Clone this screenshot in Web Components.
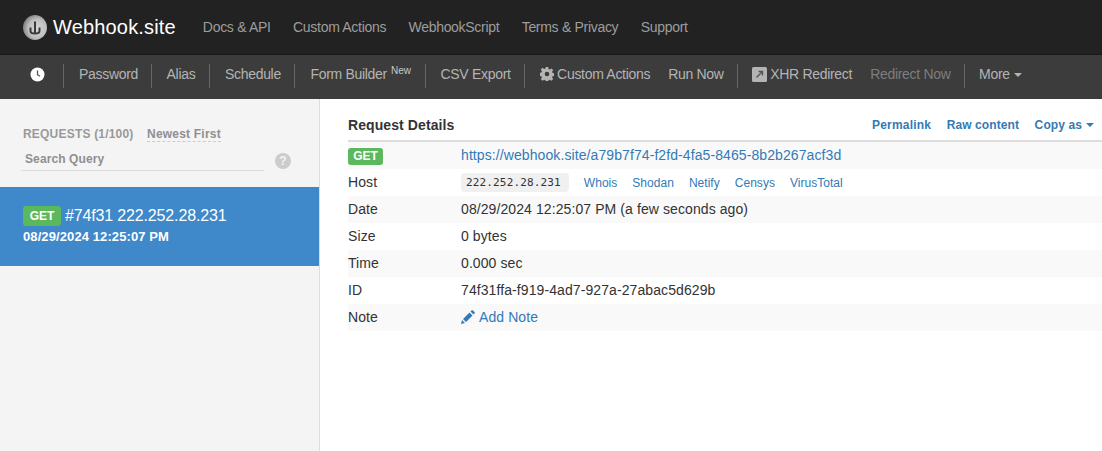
<!DOCTYPE html>
<html lang="en"><head><meta charset="utf-8"><title>Webhook.site</title>
<style>
html,body{margin:0;padding:0;height:100%;overflow:hidden;background:#fff;font:14px/20px "Liberation Sans",Arial,sans-serif;color:#333}
</style></head><body>
<wh-app>
  <wh-topbar></wh-topbar>
  <wh-toolbar></wh-toolbar>
  <wh-main>
    <wh-sidebar slot="side"></wh-sidebar>
    <wh-details slot="content"></wh-details>
  </wh-main>
</wh-app>
<script>
function el(name,html){customElements.define(name,class extends HTMLElement{constructor(){super();this.attachShadow({mode:'open'}).innerHTML=html;}});}
el('wh-app',`<style>:host{display:flex;flex-direction:column;height:451px;overflow:hidden}</style><slot></slot>`);
el('wh-topbar',`<style>
:host{display:flex;align-items:center;background:#222;flex:none;padding-left:23px;box-sizing:border-box;border-bottom:1px solid #1a1a1a;height:55px}
.brand{display:flex;align-items:center;gap:6px;color:#fff;font-size:20px;margin-right:27px;letter-spacing:.17px}
nav{display:flex;gap:22.400px;color:#9d9d9d;letter-spacing:-.3px}
a{white-space:nowrap}
svg{display:block}
</style>
<div class="brand"><svg width="24" height="25" viewBox="0 0 24 25"><defs><radialGradient id="g" cx=".6" cy=".55" r=".7"><stop offset="0" stop-color="#d8d8d8"/><stop offset=".55" stop-color="#bdbdbd"/><stop offset="1" stop-color="#666"/></radialGradient></defs><ellipse cx="12" cy="12.500" rx="12" ry="12.500" fill="url(#g)"/><path d="M12 6.500v12M7.500 12.500v3.500c0 1.800 1.500 2.500 4.500 2.500s4.500-.7 4.500-2.500v-3.500" fill="none" stroke="#3a3a3a" stroke-width="2"/></svg><span>Webhook.site</span></div>
<nav><a>Docs &amp; API</a><a>Custom Actions</a><a>WebhookScript</a><a>Terms &amp; Privacy</a><a>Support</a></nav>`);
el('wh-toolbar',`<style>
:host{display:flex;align-items:center;height:44px;background:#3c3c3c;flex:none;color:#b4b4b4;padding:0 0 6px 30px;box-sizing:border-box;letter-spacing:-.3px}
i{display:block;width:1px;height:24px;background:#666;flex:none;margin-top:3px}
a{white-space:nowrap;display:flex;align-items:center;padding:0 13.500px 0 15px}
a.r{padding-right:18px;padding-left:0}
.dim{color:#7d7d7d}
sup{font-size:10px;line-height:0;position:relative;top:-3px;margin-left:4px;color:#c8c8c8;letter-spacing:0}
svg{display:block;flex:none}
.caret{width:0;height:0;border:4px solid transparent;border-top-color:currentColor;border-bottom:0;margin-left:4px;margin-top:2px}
.clock{margin-right:18px}
</style>
<svg class="clock" width="15" height="15" viewBox="0 0 15 15"><circle cx="7.500" cy="7.500" r="7" fill="#fff"/><path d="M7.500 3.500v4.200l2.500 1.500" fill="none" stroke="#555" stroke-width="1.300"/></svg>
<i></i><a style="padding-right:12.500px">Password</a><i></i><a>Alias</a><i></i><a>Schedule</a><i></i><a style="padding:0 14.500px 0 15px">Form Builder<sup>New</sup></a><i></i><a style="padding-left:14px">CSV Export</a><i></i>
<a class="r" style="padding-left:15px"><svg width="14" height="14" viewBox="0 0 14 14" style="margin-right:3px"><path fill="#b4b4b4" fill-rule="evenodd" d="M5.800 0h2.400l.4 2 1.200.5 1.700-1.100 1.700 1.700-1.100 1.700.5 1.200 2 .4v2.400l-2 .4-.5 1.200 1.100 1.700-1.700 1.700-1.700-1.100-1.200.5-.4 2H5.800l-.4-2-1.200-.5-1.700 1.100-1.700-1.700 1.100-1.700-.5-1.200-2-.4V5.800l2-.4.5-1.200-1.100-1.700 1.700-1.700 1.700 1.100 1.200-.5zM7 4.700a2.300 2.300 0 1 0 0 4.600 2.300 2.300 0 0 0 0-4.600z"/></svg>Custom Actions</a>
<a class="r" style="padding-right:13.500px">Run Now</a><i></i>
<a class="r" style="padding-left:14px"><svg width="15" height="15" viewBox="0 0 15 15" style="margin-right:3px"><rect width="15" height="15" rx="1.500" fill="#b4b4b4"/><path d="M4.500 10.500l5.500-5.500M6.500 4.500h4v4" fill="none" stroke="#555" stroke-width="1.400"/></svg>XHR Redirect</a>
<a class="r dim" style="padding-right:13.500px;padding-left:-.5px">Redirect Now</a><i></i>
<a style="padding-left:14px">More<span class="caret"></span></a>`);
el('wh-main',`<style>:host{display:flex;flex:1;min-height:0}</style><slot name="side"></slot><slot name="content"></slot>`);
el('wh-sidebar',`<style>
:host{display:block;width:320px;flex:none;box-sizing:border-box;background:#f4f4f4;border-right:1px solid #ddd;font-size:12px;font-weight:700;color:#999;padding-top:27px}
.head{display:flex;padding-left:23px;gap:13.500px;line-height:17px;letter-spacing:.2px}
.sort{color:#8f8f8f;border-bottom:1px dashed #ccc;height:15px}
.search{display:flex;align-items:center;margin:4px 0 16px 21px}
.q{width:243px;box-sizing:border-box;padding:0 0 0 4px;border-bottom:1px solid #ddd;line-height:20px;height:24px;color:#8f8f8f;display:flex;align-items:center;letter-spacing:.1px}
.help{width:16px;height:16px;border-radius:50%;background:#ccc;color:#f4f4f4;margin:4px 0 0 11px;display:flex;align-items:center;justify-content:center;font-size:12px}
.item{background:#3f88c9;height:79px;box-sizing:border-box;padding:18px 23px 0;color:#fff}
.l1{display:flex;align-items:center;font-size:16px;font-weight:400;line-height:22px;letter-spacing:-.15px}
.l2{line-height:18px;margin-top:1px;font-size:13px;letter-spacing:.1px}
</style>
<div class="head"><span>REQUESTS (1/100)</span><span class="sort">Newest First</span></div>
<div class="search"><div class="q">Search Query</div><div class="help">?</div></div>
<div class="item"><div class="l1"><wh-badge style="margin-right:4px">GET</wh-badge><span>#74f31 222.252.28.231</span></div><div class="l2">08/29/2024 12:25:07 PM</div></div>`);
el('wh-badge',`<style>:host{display:inline-block;background:#5cb85c;color:#fff;font:700 12px/20px "Liberation Sans",Arial,sans-serif;letter-spacing:0;width:38px;height:20px;text-align:center;border-radius:3px}</style><slot></slot>`);
el('wh-details',`<style>
:host{display:block;flex:1;padding-left:28px;min-width:0;color:#333;letter-spacing:.09px}
.title{display:flex;justify-content:space-between;align-items:center;padding-top:10px;box-sizing:border-box;border-bottom:2px solid #ddd;padding-right:8px;height:43px}
b{font-size:14px}
.links{display:flex;gap:15.500px;font-size:12px;font-weight:700;color:#337ab7;align-items:center;letter-spacing:.1px}
.links span:first-child{letter-spacing:.2px}
.caret{display:inline-block;width:0;height:0;border:4px solid transparent;border-top-color:currentColor;border-bottom:0;margin-left:4px;vertical-align:2px}
.row{display:grid;grid-template-columns:113px 1fr;height:27px;align-items:center;padding-bottom:1px;box-sizing:border-box}
a{color:#337ab7}
.sm{font-size:12px;display:flex;align-items:center;gap:15px;color:#337ab7;letter-spacing:.03px}
.sm span{margin-top:2px}
code{font:11px/19px "DejaVu Sans Mono","Liberation Mono",monospace;background:#f0f0f0;color:#333;border-radius:4px;padding:0 8px 0 5px;height:19px;display:block;letter-spacing:.15px}
.note{display:flex;align-items:center;gap:4px}
svg{display:block}
</style>
<div class="title"><b>Request Details</b><div class="links"><span>Permalink</span><span>Raw content</span><span>Copy as<span class="caret"></span></span></div></div>
<div class="rows">
<div class="row" style="background:#f9f9f9"><div><wh-badge style="width:35px;height:17px;line-height:17px;display:block;margin-top:3px">GET</wh-badge></div><a>https://webhook.site/a79b7f74-f2fd-4fa5-8465-8b2b267acf3d</a></div>
<div class="row" style="background:#fff"><div>Host</div><div class="sm"><code>222.252.28.231</code><span>Whois</span><span>Shodan</span><span>Netify</span><span>Censys</span><span>VirusTotal</span></div></div>
<div class="row" style="background:#f9f9f9"><div>Date</div><div>08/29/2024 12:25:07 PM (a few seconds ago)</div></div>
<div class="row" style="background:#fff"><div>Size</div><div>0 bytes</div></div>
<div class="row" style="background:#f9f9f9"><div>Time</div><div>0.000 sec</div></div>
<div class="row" style="background:#fff"><div>ID</div><div>74f31ffa-f919-4ad7-927a-27abac5d629b</div></div>
<div class="row" style="background:#f9f9f9"><div>Note</div><a class="note"><svg width="14" height="14" viewBox="0 0 14 14"><path fill="#337ab7" d="M0 14l1-4 3 3zM2 9l6.500-6.500 3 3L5 12zM9.500 1.500l1-1c.5-.5 1-.5 1.500 0l1.500 1.500c.5.5.5 1 0 1.500l-1 1z"/></svg>Add Note</a></div>
</div>`);
</script>
</body></html>
